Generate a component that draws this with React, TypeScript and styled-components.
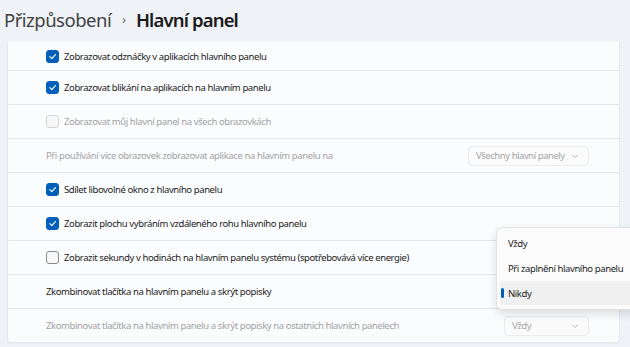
import React from 'react'
import styled, { createGlobalStyle } from 'styled-components'

const GlobalStyle = createGlobalStyle`
  html, body {
    margin: 0;
    padding: 0;
    background: #eff3f8;
    font-family: "Noto Sans", "Open Sans", sans-serif;
    color: #1b1b1b;
    overflow: hidden;
  }
`

const Page = styled.div`
  width: 630px;
  height: 347px;
  position: relative;
  overflow: hidden;
  background: #eff3f8;
`

const Header = styled.h1`
  margin: 0;
  height: 42px;
  padding: 0 0 2px 4px;
  display: flex;
  align-items: center;
  gap: 11px;
  font-size: 18.5px;
  font-weight: 400;
  line-height: 1;
  box-sizing: border-box;
`

const Crumb = styled.span<{ $current?: boolean }>`
  font-weight: ${p => (p.$current ? 600 : 400)};
  color: ${p => (p.$current ? '#1a1a1a' : '#404040')};
  letter-spacing: ${p => (p.$current ? -0.85 : -0.5)}px;
`

const Sep = styled.span`
  font-size: 12px;
  color: #606060;
  margin-right: -1px;
`

const Panel = styled.div`
  margin-left: 7px;
  width: 611px;
  background: #fbfcfe;
  border: 1px solid #e6e8eb;
  border-top: none;
  border-radius: 0 0 4px 4px;
  box-shadow: 0 1px 1px rgba(0, 0, 0, 0.03);
`

const Row = styled.div<{ $first?: boolean }>`
  height: ${p => (p.$first ? 28 : 33)}px;
  display: flex;
  align-items: center;
  justify-content: space-between;
  padding: 0 30px 0 38px;
  border-top: ${p => (p.$first ? 'none' : '1px solid #e5e6e8')};
`

const Label = styled.label<{ $disabled?: boolean }>`
  display: flex;
  align-items: center;
  gap: 5px;
  font-size: 9.5px;
  letter-spacing: -0.4px;
  color: ${p => (p.$disabled ? '#a2a2a2' : '#1b1b1b')};
  white-space: nowrap;
`

const Box = styled.span<{ $checked?: boolean; $disabled?: boolean }>`
  width: 13px;
  height: 13px;
  box-sizing: border-box;
  border-radius: 3px;
  display: inline-flex;
  align-items: center;
  justify-content: center;
  flex-shrink: 0;
  background: ${p => (p.$checked ? '#005fb8' : '#f7f7f7')};
  border: 1px solid
    ${p => (p.$checked ? '#005fb8' : p.$disabled ? '#d6d6d6' : '#8a8a8a')};
`

const Select = styled.div<{ $w: number }>`
  width: ${p => p.$w}px;
  height: 20px;
  box-sizing: border-box;
  border: 1px solid #ebebeb;
  border-radius: 4px;
  background: #fbfbfb;
  display: flex;
  align-items: center;
  justify-content: space-between;
  padding: 0 9px 0 7px;
  font-size: 9.5px;
  letter-spacing: -0.45px;
  white-space: nowrap;
  color: #a5a5a5;
`

const Menu = styled.div`
  position: absolute;
  left: 496px;
  top: 227px;
  width: 150px;
  padding: 3px 0;
  background: #fbfbfb;
  border: 1px solid #e2e2e2;
  border-radius: 6px;
  box-shadow: 0 4px 10px rgba(0, 0, 0, 0.12);
  box-sizing: border-box;
`

const MenuItem = styled.div<{ $selected?: boolean }>`
  position: relative;
  height: 24px;
  margin: 0 0 1px 3px;
  padding-left: 8px;
  display: flex;
  align-items: center;
  font-size: 9.5px;
  letter-spacing: -0.4px;
  border-radius: 4px;
  background: ${p => (p.$selected ? '#f0f0f0' : 'transparent')};
  white-space: nowrap;

  &::before {
    content: '';
    display: ${p => (p.$selected ? 'block' : 'none')};
    position: absolute;
    left: 1px;
    top: 7px;
    width: 3px;
    height: 10px;
    border-radius: 2px;
    background: #005fb8;
  }
`

const Check = () => (
  <svg width="9" height="9" viewBox="0 0 10 10">
    <path d="M2 5.2 L4.2 7.3 L8.2 2.8" fill="none" stroke="#fff" strokeWidth="1.3" strokeLinecap="round" strokeLinejoin="round" />
  </svg>
)

const Chevron = () => (
  <svg width="8" height="8" viewBox="0 0 8 8">
    <path d="M1.5 3 L4 5.5 L6.5 3" fill="none" stroke="#a8a8a8" strokeWidth="0.9" strokeLinecap="round" strokeLinejoin="round" />
  </svg>
)

type Item = {
  text: string
  checkbox?: boolean
  checked?: boolean
  disabled?: boolean
  select?: { value: string; w: number }
}

const items: Item[] = [
  { text: 'Zobrazovat odznáčky v aplikacích hlavního panelu', checkbox: true, checked: true },
  { text: 'Zobrazovat blikání na aplikacích na hlavním panelu', checkbox: true, checked: true },
  { text: 'Zobrazovat můj hlavní panel na všech obrazovkách', checkbox: true, disabled: true },
  { text: 'Při používání více obrazovek zobrazovat aplikace na hlavním panelu na', disabled: true, select: { value: 'Všechny hlavní panely', w: 121 } },
  { text: 'Sdílet libovolné okno z hlavního panelu', checkbox: true, checked: true },
  { text: 'Zobrazit plochu vybráním vzdáleného rohu hlavního panelu', checkbox: true, checked: true },
  { text: 'Zobrazit sekundy v hodinách na hlavním panelu systému (spotřebovává více energie)', checkbox: true },
  { text: 'Zkombinovat tlačítka na hlavním panelu a skrýt popisky' },
  { text: 'Zkombinovat tlačítka na hlavním panelu a skrýt popisky na ostatních hlavních panelech', disabled: true, select: { value: 'Vždy', w: 85 } },
]

export default function App() {
  return (
    <Page>
      <GlobalStyle />
      <Header>
        <Crumb>Přizpůsobení</Crumb>
        <Sep>›</Sep>
        <Crumb $current>Hlavní panel</Crumb>
      </Header>
      <Panel>
        {items.map((it, i) => (
          <Row key={i} $first={i === 0}>
            <Label $disabled={it.disabled}>
              {it.checkbox && (
                <Box $checked={it.checked} $disabled={it.disabled}>
                  {it.checked && <Check />}
                </Box>
              )}
              {it.text}
            </Label>
            {it.select && (
              <Select $w={it.select.w}>
                {it.select.value}
                <Chevron />
              </Select>
            )}
          </Row>
        ))}
      </Panel>
      <Menu>
        <MenuItem>Vždy</MenuItem>
        <MenuItem>Při zaplnění hlavního panelu</MenuItem>
        <MenuItem $selected>Nikdy</MenuItem>
      </Menu>
    </Page>
  )
}
